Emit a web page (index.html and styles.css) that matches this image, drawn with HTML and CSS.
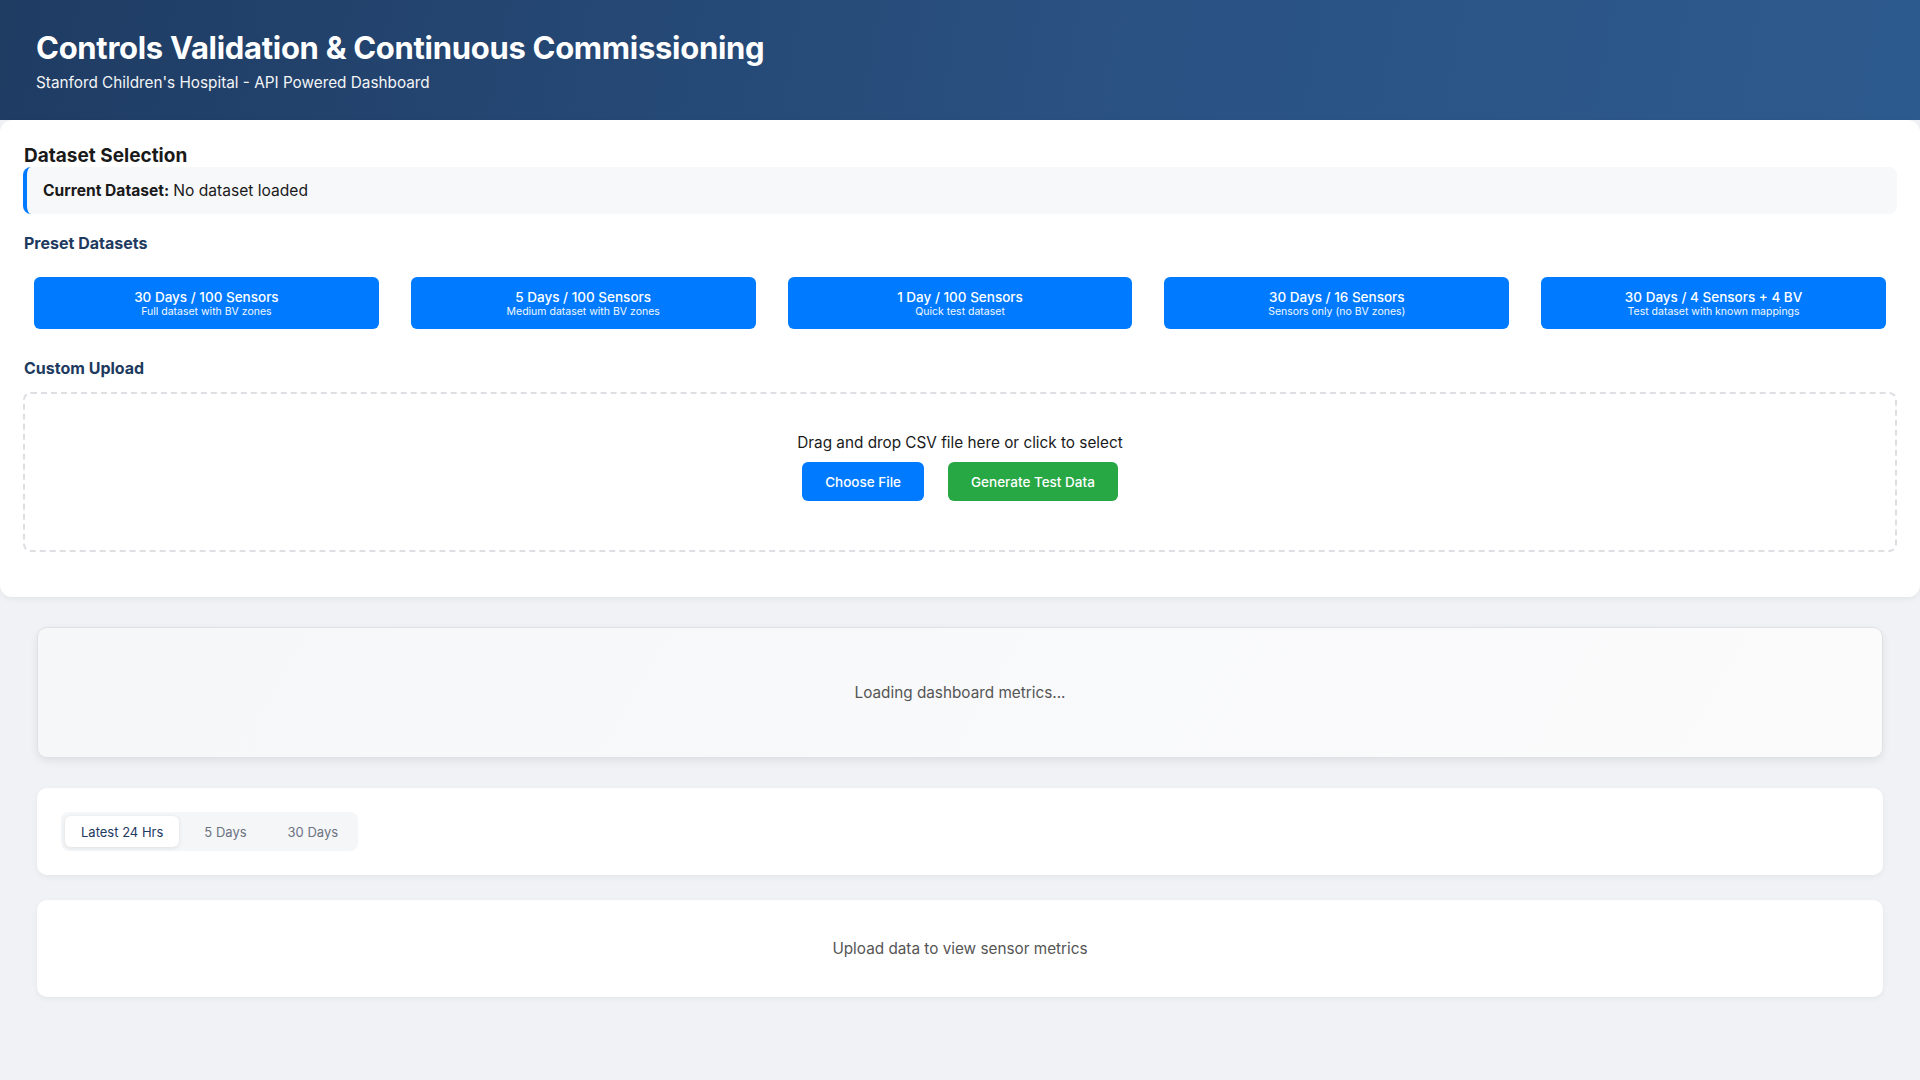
FILE: index.html
```html
<!DOCTYPE html>
<html lang="en">
<head>
<meta charset="utf-8">
<title>Controls Validation &amp; Continuous Commissioning</title>
<link rel="stylesheet" href="styles.css">
</head>
<body>
<header class="header">
  <h1 class="header-title">Controls Validation &amp; Continuous Commissioning</h1>
  <p class="header-sub">Stanford Children's Hospital - API Powered Dashboard</p>
</header>

<section class="dataset-card">
  <h2 class="section-title">Dataset Selection</h2>
  <div class="current-dataset"><strong>Current Dataset:</strong> No dataset loaded</div>

  <h3 class="sub-title">Preset Datasets</h3>
  <div class="preset-grid">
    <button class="preset-btn"><span class="preset-name">30 Days / 100 Sensors</span><span class="preset-desc">Full dataset with BV zones</span></button>
    <button class="preset-btn"><span class="preset-name">5 Days / 100 Sensors</span><span class="preset-desc">Medium dataset with BV zones</span></button>
    <button class="preset-btn"><span class="preset-name">1 Day / 100 Sensors</span><span class="preset-desc">Quick test dataset</span></button>
    <button class="preset-btn"><span class="preset-name">30 Days / 16 Sensors</span><span class="preset-desc">Sensors only (no BV zones)</span></button>
    <button class="preset-btn"><span class="preset-name">30 Days / 4 Sensors + 4 BV</span><span class="preset-desc">Test dataset with known mappings</span></button>
  </div>

  <h3 class="sub-title">Custom Upload</h3>
  <div class="dropzone">
    <p class="dropzone-text">Drag and drop CSV file here or click to select</p>
    <div class="dropzone-actions">
      <button class="btn btn-blue">Choose File</button>
      <button class="btn btn-green">Generate Test Data</button>
    </div>
  </div>
</section>

<main class="main">
  <div class="metrics-card">Loading dashboard metrics...</div>

  <div class="panel tabs-panel">
    <div class="tabs">
      <button class="tab tab-active">Latest 24 Hrs</button>
      <button class="tab">5 Days</button>
      <button class="tab">30 Days</button>
    </div>
  </div>

  <div class="panel empty-panel">Upload data to view sensor metrics</div>
</main>
</body>
</html>
```

FILE: styles.css
```css
* { box-sizing: border-box; }

body {
  margin: 0;
  background: #f0f2f5;
  font-family: Inter, "Liberation Sans", sans-serif;
  color: #1a1a1a;
}

.header {
  height: 120px;
  padding: 30px 36px 0;
  background: linear-gradient(100deg, #1f3c63 0%, #2a5283 60%, #2d5a8e 100%);
  color: #fff;
}

.header-title {
  margin: 0;
  font-size: 31px;
  font-weight: 700;
  line-height: 36px;
  letter-spacing: -0.3px;
}

.header-sub {
  margin: 7px 0 0;
  font-size: 15.3px;
  line-height: 20px;
  opacity: 0.95;
}

.dataset-card {
  background: #fff;
  border-radius: 12px;
  padding: 25px 24px 45px;
  box-shadow: 0 2px 6px rgba(0, 0, 0, 0.06);
}

.section-title {
  margin: 0;
  font-size: 19px;
  line-height: 22px;
  font-weight: 700;
  color: #1a1a1a;
}

.current-dataset {
  margin-left: -1px;
  margin-right: -1px;
  height: 47px;
  display: flex;
  align-items: center;
  padding-left: 16px;
  background: #f7f8fa;
  border-left: 4px solid #007bff;
  border-radius: 8px;
  font-size: 15.6px;
}

.current-dataset strong { font-weight: 700; margin-right: 4px; }

.sub-title {
  margin: 20px 0 0;
  font-size: 16px;
  line-height: 18px;
  font-weight: 700;
  color: #1e3a5f;
}

.preset-grid {
  display: grid;
  grid-template-columns: repeat(5, 1fr);
  gap: 32px;
  padding: 25px 10px 0;
}

.preset-btn {
  height: 52px;
  border: none;
  border-radius: 6px;
  background: #007bff;
  color: #fff;
  font-family: inherit;
  display: flex;
  flex-direction: column;
  align-items: center;
  justify-content: center;
  padding: 0;
}

.preset-name { font-size: 13.5px; line-height: 16px; font-weight: 500; }
.preset-desc { font-size: 10.5px; line-height: 13px; opacity: 0.95; }

.preset-grid + .sub-title { margin-top: 30px; }

.dropzone {
  margin-top: 15px;
  margin-left: -1px;
  margin-right: -1px;
  height: 160px;
  border: 2px dashed #dddfe3;
  border-radius: 8px;
  display: flex;
  flex-direction: column;
  align-items: center;
  padding-top: 39px;
}

.dropzone-text {
  margin: 0;
  font-size: 15.3px;
  line-height: 20px;
  color: #1a1a1a;
}

.dropzone-actions {
  display: flex;
  gap: 24px;
  margin-top: 9px;
}

.btn {
  height: 39px;
  border: none;
  border-radius: 6px;
  color: #fff;
  font-family: inherit;
  font-size: 13.5px;
  font-weight: 500;
  padding: 0 23px;
}

.btn-blue { background: #007bff; }
.btn-green { background: #28a745; }

.main {
  padding: 30px 37px;
  display: flex;
  flex-direction: column;
}

.metrics-card {
  height: 131px;
  margin-bottom: 30px;
  display: flex;
  align-items: center;
  justify-content: center;
  background: linear-gradient(120deg, #f6f7f9 0%, #fbfbfc 100%);
  border: 1px solid #dfe1e5;
  border-radius: 10px;
  box-shadow: 0 3px 8px rgba(0, 0, 0, 0.08);
  font-size: 15.3px;
  color: #555;
}

.panel {
  background: #fff;
  border-radius: 10px;
  box-shadow: 0 2px 6px rgba(0, 0, 0, 0.05);
}

.tabs-panel {
  height: 87px;
  margin-bottom: 25px;
  display: flex;
  align-items: center;
  padding-left: 24px;
}

.tabs {
  display: flex;
  gap: 9px;
  padding: 4px;
  background: #f5f6f8;
  border-radius: 8px;
}

.tab {
  height: 31px;
  padding: 0 16px;
  border: none;
  background: transparent;
  border-radius: 6px;
  font-family: inherit;
  font-size: 13px;
  color: #6b7280;
}

.tab-active {
  background: #fff;
  color: #1e3a5f;
  font-weight: 400;
  box-shadow: 0 1px 4px rgba(0, 0, 0, 0.1);
}

.empty-panel {
  height: 97px;
  display: flex;
  align-items: center;
  justify-content: center;
  font-size: 15.3px;
  color: #555;
}
```
